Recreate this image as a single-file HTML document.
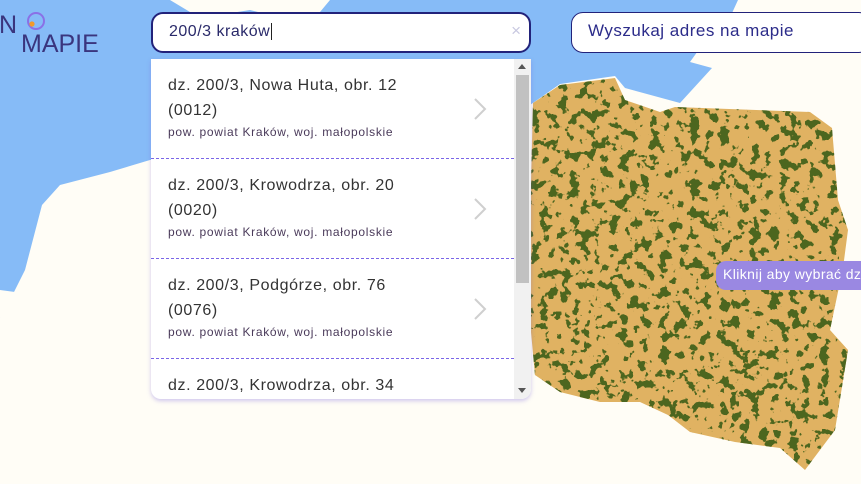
<!DOCTYPE html>
<html><head><meta charset="utf-8"><style>
*{margin:0;padding:0;box-sizing:border-box}
body{width:861px;height:484px;overflow:hidden;position:relative;background:#fffdf6;font-family:"Liberation Sans",sans-serif}
svg.bg{position:absolute;left:0;top:0}
.inp{position:absolute;background:#fff;border:2px solid #22227a;border-radius:12px;height:41px;top:12px}
.drop{position:absolute;left:151px;top:59px;width:380px;height:340px;background:#fff;border-radius:0 0 10px 10px;box-shadow:0 2px 4px rgba(120,100,220,.35);overflow:hidden}
.item{height:100px;border-bottom:1px dashed #7a66e8;position:relative;padding:14px 0 0 17px;width:363px}
.l1{font-size:16px;color:#333;line-height:25px;letter-spacing:.6px}
.l3{font-size:12px;color:#4a3a5a;margin-top:2px;letter-spacing:.7px}
.chev{position:absolute;left:322px;top:38px}
.sb{position:absolute;right:0;top:0;width:17px;height:340px;background:#f1f1f1}
.th{position:absolute;left:2px;top:16px;width:13px;height:208px;background:#c1c1c1}
</style></head><body>
<svg class="bg" width="861" height="484">
<defs>
<filter id="nz" x="0" y="0" width="100%" height="100%" color-interpolation-filters="sRGB"><feTurbulence type="fractalNoise" baseFrequency="0.1" numOctaves="3" seed="4"/><feColorMatrix values="0 0 0 0 0.30  0 0 0 0 0.40  0 0 0 0 0.12  0 0 0 30 -17"/><feComposite in2="SourceGraphic" operator="in"/></filter>
</defs>
<polygon fill="#86bbf7" points="0,0 738,0 722,35 700,48 690,62 712,68 680,103 625,88 615,76 560,84 530,105 520,160 150,160 110,172 60,185 42,205 25,270 10,300 0,318"/>
<polygon fill="#fffdf6" points="170,0 330,0 320,12 290,20 250,10 200,18"/>
<polygon fill="#fffdf6" points="0,290 15,292 20,310 0,318"/>
<polygon fill="#e0b262" points="533,103 560,85 615,78 625,100 660,112 675,107 810,112 832,128 838,200 848,230 843,268 830,330 848,350 835,430 805,470 780,448 735,442 690,432 668,415 640,402 600,402 560,392 535,375 528,300"/>
<polygon fill="#ddac5c" filter="url(#nz)" points="533,103 560,85 615,78 625,100 660,112 675,107 810,112 832,128 838,200 848,230 843,268 830,330 848,350 835,430 805,470 780,448 735,442 690,432 668,415 640,402 600,402 560,392 535,375 528,300"/>
<g fill="none">
<circle cx="36" cy="21" r="8" stroke="#8a70e6" stroke-width="2"/>
<circle cx="32" cy="24" r="2.6" fill="#f29a2a"/>
</g>
<text x="-1" y="33" font-size="25" fill="#3a357e" font-family="Liberation Sans">N</text>
<text x="21" y="52" font-size="25" fill="#3a357e" font-family="Liberation Sans">MAPIE</text>
</svg>
<div class="inp" style="left:151px;width:380px"><span style="position:absolute;left:16px;top:9px;font-size:16px;color:#2a2a6a;letter-spacing:.5px">200/3 kraków<span style="border-left:1px solid #222;margin-left:1px"></span></span><span style="position:absolute;right:8px;top:7px;color:#c8c8e0;font-size:17px">×</span></div>
<div class="inp" style="left:571px;width:300px;border-width:1.5px"><span style="position:absolute;left:16px;top:8px;font-size:17px;color:#2c2c8a;letter-spacing:.5px">Wyszukaj adres na mapie</span></div>
<div class="drop">
<div class="item"><div class="l1">dz. 200/3, Nowa Huta, obr. 12<br>(0012)</div><div class="l3">pow. powiat Kraków, woj. małopolskie</div><svg class="chev" width="14" height="24"><path d="M2 2 L12 12 L2 22" stroke="#cfcfcf" stroke-width="2" fill="none"/></svg></div>
<div class="item"><div class="l1">dz. 200/3, Krowodrza, obr. 20<br>(0020)</div><div class="l3">pow. powiat Kraków, woj. małopolskie</div><svg class="chev" width="14" height="24"><path d="M2 2 L12 12 L2 22" stroke="#cfcfcf" stroke-width="2" fill="none"/></svg></div>
<div class="item"><div class="l1">dz. 200/3, Podgórze, obr. 76<br>(0076)</div><div class="l3">pow. powiat Kraków, woj. małopolskie</div><svg class="chev" width="14" height="24"><path d="M2 2 L12 12 L2 22" stroke="#cfcfcf" stroke-width="2" fill="none"/></svg></div>
<div class="item" style="border:none"><div class="l1">dz. 200/3, Krowodrza, obr. 34</div></div>
<div class="sb"><div class="th"></div><div style="position:absolute;left:4px;top:5px;border:4px solid transparent;border-bottom:5px solid #555;border-top:0"></div><div style="position:absolute;left:4px;bottom:6px;border:4px solid transparent;border-top:5px solid #555;border-bottom:0"></div></div>
</div>
<div style="position:absolute;left:716px;top:261px;width:160px;height:29px;background:#9a88e2;border-radius:10px;color:#fff;font-size:14px;padding:5px 0 0 7px;white-space:nowrap;letter-spacing:.4px">Kliknij aby wybrać działkę</div>
</body></html>
